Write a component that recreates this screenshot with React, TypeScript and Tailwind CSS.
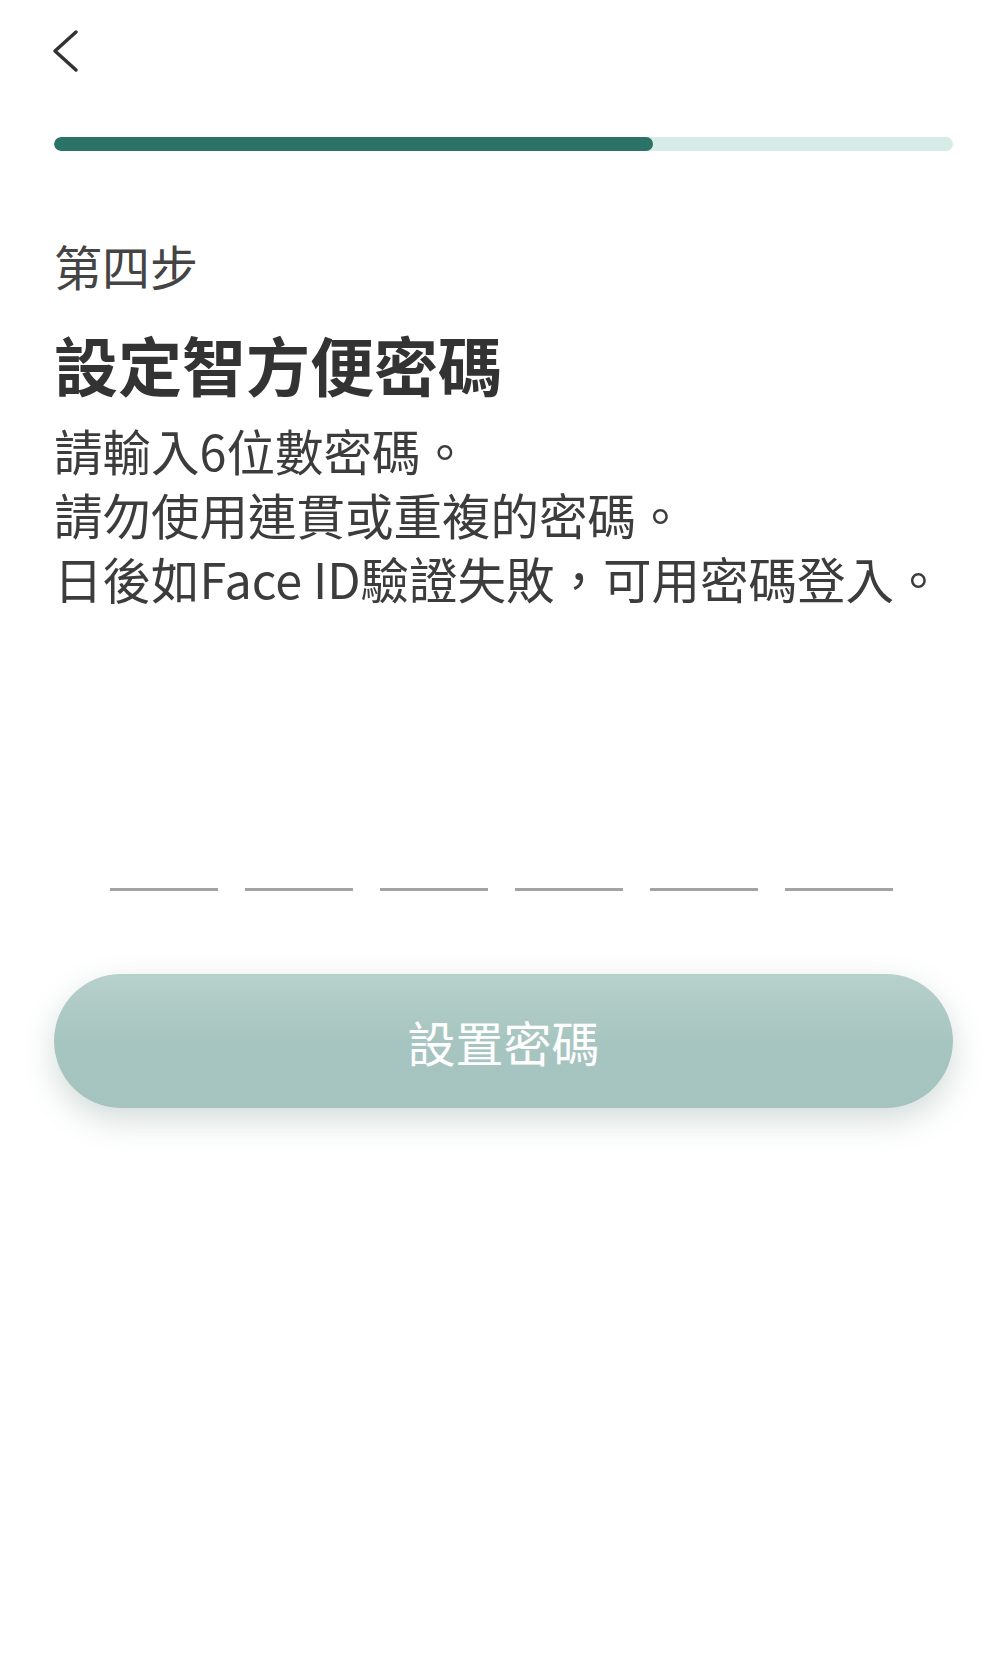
import { useState } from "react";

const STEP = 4;
const TOTAL_STEPS = 6;

function BackIcon() {
  return (
    <svg width="30" height="44" viewBox="0 0 30 44" fill="none" className="-ml-[4px]">
      <polyline
        points="26,3 5,22 26,41"
        stroke="#333333"
        strokeWidth="3.5"
        strokeLinecap="round"
        strokeLinejoin="round"
      />
    </svg>
  );
}

export default function App() {
  const [code] = useState<string[]>(["", "", "", "", "", ""]);
  const progress = (STEP / TOTAL_STEPS) * 100;
  const ready = code.every((c) => c !== "");

  return (
    <div
      className="min-h-[1675px] w-full bg-white pl-[54px] pr-[47px] text-[#333333]"
      style={{ fontFamily: '"Noto Sans CJK TC", "Noto Sans", sans-serif' }}
    >
      <div className="flex h-[73px] items-end">
        <button type="button" aria-label="返回" className="block">
          <BackIcon />
        </button>
      </div>

      <div className="mt-[64px] h-[14px] w-full overflow-hidden rounded-full bg-[#d5ece7]">
        <div className="h-full rounded-full bg-[#2a7366]" style={{ width: `${progress}%` }} />
      </div>

      <p className="mt-[90px] text-[48px] leading-[48px] text-[#444444]">第四步</p>

      <h1 className="mt-[42px] text-[64px] font-bold leading-[64px] text-[#333333]">設定智方便密碼</h1>

      <div className="mt-[23px] text-[48.5px] leading-[64px] text-[#3c3c3c]">
        <p>請輸入6位數密碼。</p>
        <p>請勿使用連貫或重複的密碼。</p>
        <p>日後如Face ID驗證失敗，可用密碼登入。</p>
      </div>

      <div className="mt-[278px] flex justify-center gap-[27px] pr-[4px]">
        {code.map((c, i) => (
          <div
            key={i}
            className="flex h-[3px] w-[108px] items-end justify-center border-b-[3px] border-[#a3a3a3]"
          >
            {c}
          </div>
        ))}
      </div>

      <button
        type="button"
        disabled={!ready}
        className="mt-[83px] flex h-[134px] w-full items-center justify-center rounded-full bg-gradient-to-b from-[#b7d0cb] via-[#a7c5c0] to-[#a6c4bf] text-[48px] text-white shadow-[0_12px_32px_rgba(70,110,100,0.24)]"
      >
        設置密碼
      </button>
    </div>
  );
}
